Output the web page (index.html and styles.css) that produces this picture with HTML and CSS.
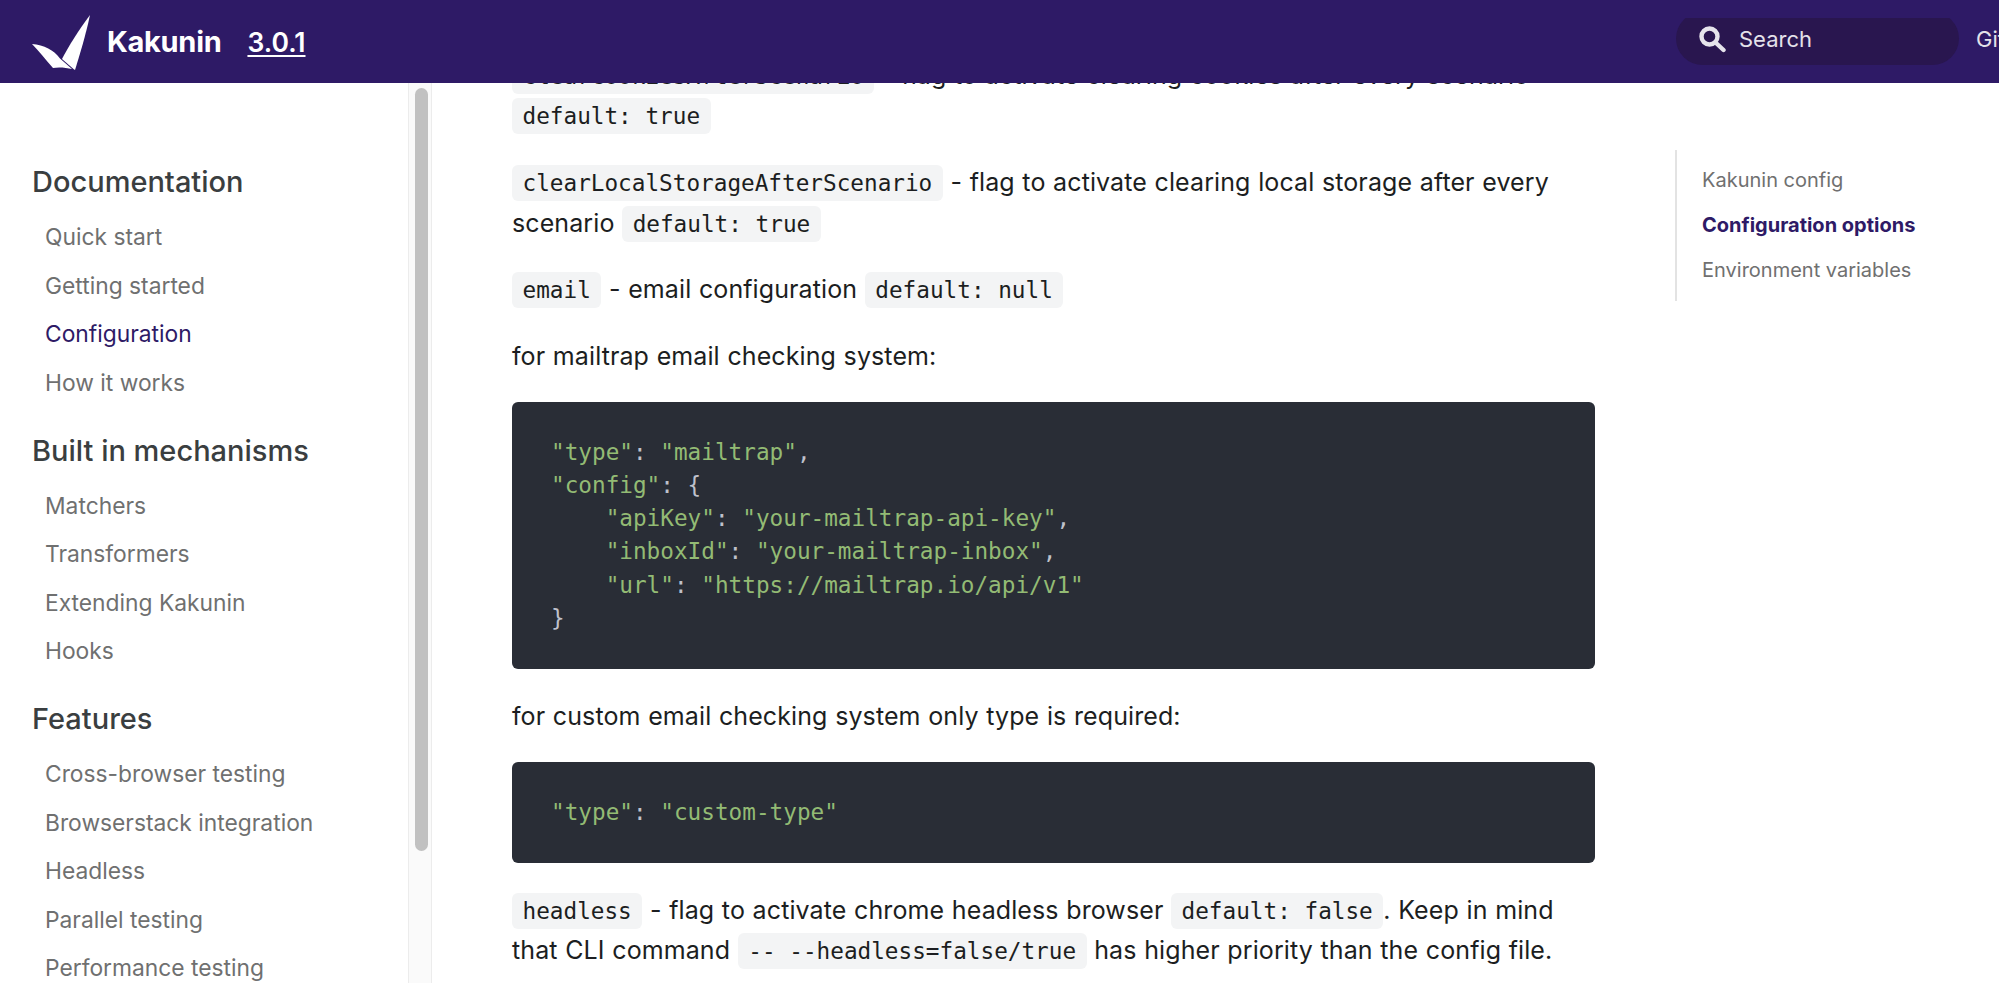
FILE: index.html
```html
<!DOCTYPE html>
<html lang="en">
<head>
<meta charset="utf-8">
<title>Configuration | Kakunin</title>
<link rel="stylesheet" href="styles.css">
</head>
<body>
<header class="navbar">
  <a class="brand" href="#">
    <svg class="logo" viewBox="0 0 62 58" width="62" height="58" aria-hidden="true">
      <path class="logo-fill" d="M60 1 C56 20 50 40 45 56 L43.5 55 L32 45 C38 33 50 14 60 1 Z"/>
      <path class="logo-fill" d="M2 30 C14 31 24 36 30 44.5 L42 55 C36 53.500 28 53 23 54 C15 45 9 37 2 30 Z"/>
    </svg>
    <span class="brand-name">Kakunin</span>
  </a>
  <a class="version" href="#">3.0.1</a>
  <div class="nav-right">
    <div class="search">
      <svg class="search-icon" viewBox="0 0 28 28" width="28" height="28" aria-hidden="true">
        <circle cx="11.500" cy="11.500" r="8" fill="none" stroke="#e6e4ec" stroke-width="4.400"/>
        <path d="M17.500 17.500 L25.500 25" stroke="#e6e4ec" stroke-width="4.400" stroke-linecap="round" fill="none"/>
      </svg>
      <span class="search-label">Search</span>
    </div>
    <a class="nav-link" href="#">GitHub</a>
  </div>
</header>

<div class="layout">
  <nav class="sidebar">
    <section class="side-group">
      <h3 class="side-title">Documentation</h3>
      <a class="side-item" href="#">Quick start</a>
      <a class="side-item" href="#">Getting started</a>
      <a class="side-item is-active" href="#">Configuration</a>
      <a class="side-item" href="#">How it works</a>
    </section>
    <section class="side-group">
      <h3 class="side-title">Built in mechanisms</h3>
      <a class="side-item" href="#">Matchers</a>
      <a class="side-item" href="#">Transformers</a>
      <a class="side-item" href="#">Extending Kakunin</a>
      <a class="side-item" href="#">Hooks</a>
    </section>
    <section class="side-group">
      <h3 class="side-title">Features</h3>
      <a class="side-item" href="#">Cross-browser testing</a>
      <a class="side-item" href="#">Browserstack integration</a>
      <a class="side-item" href="#">Headless</a>
      <a class="side-item" href="#">Parallel testing</a>
      <a class="side-item" href="#">Performance testing</a>
    </section>
  </nav>
  <div class="scroll-track"><div class="scroll-thumb"></div></div>

  <main class="main">
    <article class="article">
      <p><code>clearCookiesAfterScenario</code> - flag to activate clearing cookies after every scenario <code>default: true</code></p>
      <p><code>clearLocalStorageAfterScenario</code> - flag to activate clearing local storage after every scenario <code>default: true</code></p>
      <p><code>email</code> - email configuration <code>default: null</code></p>
      <p>for mailtrap email checking system:</p>
<pre class="code-block"><span class="s">"type"</span>: <span class="s">"mailtrap"</span>,
<span class="s">"config"</span>: {
    <span class="s">"apiKey"</span>: <span class="s">"your-mailtrap-api-key"</span>,
    <span class="s">"inboxId"</span>: <span class="s">"your-mailtrap-inbox"</span>,
    <span class="s">"url"</span>: <span class="s">"https://mailtrap.io/api/v1"</span>
}</pre>
      <p>for custom email checking system only type is required:</p>
<pre class="code-block"><span class="s">"type"</span>: <span class="s">"custom-type"</span></pre>
      <p><code>headless</code> - flag to activate chrome headless browser <code>default: false</code>. Keep in mind that CLI command <code>-- --headless=false/true</code> has higher priority than the config file.</p>
    </article>
  </main>

  <aside class="toc">
    <a class="toc-item" href="#">Kakunin config</a>
    <a class="toc-item is-active" href="#">Configuration options</a>
    <a class="toc-item" href="#">Environment variables</a>
  </aside>
</div>
</body>
</html>
```
FILE: styles.css
```css
* { box-sizing: border-box; }
html, body { margin: 0; height: 100%; overflow: hidden; background: #fff; }
body { font-family: Inter, "Liberation Sans", sans-serif; color: #1c1e21; }
a { text-decoration: none; color: inherit; }

.navbar {
  position: relative;
  z-index: 2;
  height: 83px;
  background: #2e1a66;
  display: flex;
  align-items: center;
  padding-left: 30px;
  overflow: hidden;
  color: #fff;
}
.brand { display: flex; align-items: center; }
.logo { margin-top: 2px; display: block; }
.logo-fill { fill: #fff; }
.brand-name { margin-left: 15px; font-size: 29px; font-weight: 700; letter-spacing: -0.3px; }
.version { margin-left: 26px; font-size: 26.5px; font-weight: 600; text-decoration: underline; text-underline-offset: 3px; }
.nav-right { margin-left: auto; display: flex; align-items: center; flex: none; width: 323px; overflow: hidden; }
.search {
  flex: none;
  width: 283px;
  height: 53px;
  margin-top: -6px;
  border-radius: 27px;
  background: #29164f;
  display: flex;
  align-items: center;
  padding-left: 22px;
}
.search-icon { flex: none; display: block; }
.search-label { margin-left: 13px; font-size: 22px; color: #e4e2ea; }
.nav-link { margin-left: 17px; font-size: 22px; color: #e4e2ea; white-space: nowrap; margin-top: -6px; }

.layout { display: flex; height: 900px; overflow: hidden; }

.sidebar { flex: none; width: 408px; padding-top: 77px; overflow: hidden; }
.side-group { margin-bottom: 21.5px; }
.side-title { margin: 0 0 10px; padding-left: 32px; height: 43px; line-height: 43px; font-size: 29px; font-weight: 500; color: #3a3e40; }
.side-item { display: block; height: 48.5px; line-height: 48.5px; padding-left: 45px; font-size: 22.8px; color: #6f7070; white-space: nowrap; }
.side-item.is-active { color: #2e1a66; }

.scroll-track { flex: none; width: 24px; height: 100%; padding: 5px 5px 0 6px; background: #fafafa; border-left: 1px solid #ececec; border-right: 1px solid #ececec; }
.scroll-thumb { width: 13px; height: 763px; border-radius: 7px; background: #c1c1c1; }

.main { flex: none; width: 1163px; padding-left: 80px; overflow: hidden; }
.article { margin-top: -28.5px; font-size: 25px; line-height: 40.8px; letter-spacing: 0.1px; word-spacing: 0.5px; }
.article p { margin: 0 0 25.7px; }
.article code {
  font-family: "DejaVu Sans Mono", monospace;
  font-size: 22.7px;
  line-height: 1;
  letter-spacing: 0;
  word-spacing: 0;
  padding: 5px 10.5px;
  border-radius: 6px;
  background: #f3f4f5;
  color: #1c1e21;
}
.code-block {
  margin: 0 0 27px;
  padding: 33.5px 39px;
  border-radius: 6px;
  background: #292d36;
  color: #bfc1cc;
  font-family: "DejaVu Sans Mono", monospace;
  font-size: 22.7px;
  line-height: 33.3px;
  letter-spacing: 0;
  word-spacing: 0;
  overflow: hidden;
}
.s { color: #93bb74; }

.toc { flex: none; width: 243px; margin-left: 80px; margin-top: 67px; height: 151px; border-left: 2px solid #e3e3e3; padding: 8px 0 0 25px; overflow: hidden; }
.toc-item { display: block; height: 45px; line-height: 45px; font-size: 20px; color: #707070; white-space: nowrap; }
.toc-item.is-active { color: #2e1a66; font-weight: 700; }
```
